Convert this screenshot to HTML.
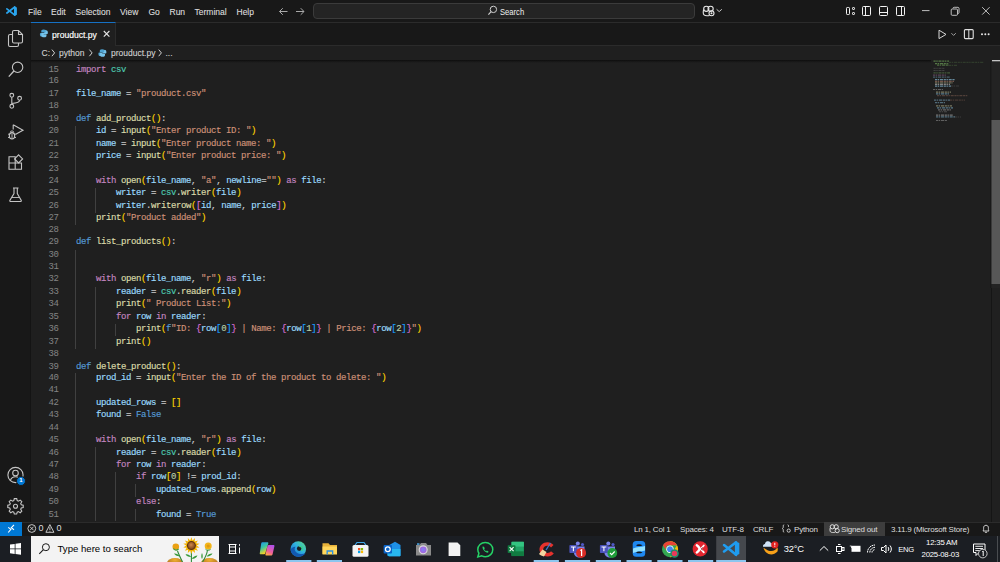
<!DOCTYPE html>
<html><head><meta charset="utf-8">
<style>
*{margin:0;padding:0;box-sizing:border-box}
html,body{width:1000px;height:562px;overflow:hidden;background:#1f1f1f;font-family:"Liberation Sans",sans-serif;color:#cccccc}
.a{position:absolute}
#title{left:0;top:0;width:1000px;height:23px;background:#181818;border-bottom:1px solid #2b2b2b}
.menu{top:5.5px;font-size:8.5px;color:#dedede;-webkit-text-stroke:0.1px currentColor;line-height:12px;white-space:pre}
#act{left:0;top:23px;width:31px;height:499px;background:#181818;border-right:1px solid #141414}
#tabs{left:31px;top:23px;width:969px;height:23px;background:#181818;border-bottom:1px solid #2b2b2b}
#tab{left:31px;top:22px;width:85px;height:24px;background:#1f1f1f;border-top:1.4px solid #1671c4;border-right:1px solid #2b2b2b}
#crumb{left:31px;top:46px;width:969px;height:14px;background:#1f1f1f}
#status{left:0;top:522px;width:1000px;height:14px;background:#181818;border-top:1px solid #2b2b2b}
#remote{left:0;top:522px;width:22px;height:14px;background:#0078d4}
#taskbar{left:0;top:536px;width:1000px;height:26px;background:#1b1e23}
#tsearch{left:31px;top:536px;width:188px;height:26px;background:#f3f3f3}
.tabt{font-size:8.6px;-webkit-text-stroke:0.15px currentColor;line-height:12px;white-space:pre}
.crumb{top:47px;font-size:8.5px;line-height:12px;color:#d2d2d2;-webkit-text-stroke:0.1px currentColor;white-space:pre}
.tb{color:#ffffff;line-height:12px;white-space:pre}
.sb{top:522.6px;font-size:8px;letter-spacing:-0.2px;line-height:13px;color:#dedede;white-space:pre}
#code{left:76px;top:63.6px;-webkit-text-stroke:0.15px currentColor;font-family:"Liberation Mono",monospace;font-size:9px;letter-spacing:-0.4px;line-height:11.435px;transform:scaleY(1.08);transform-origin:0 0;white-space:pre;color:#cccccc}
#ln{left:28.6px;top:63.6px;width:30px;font-family:"Liberation Mono",monospace;font-size:9px;letter-spacing:-0.4px;line-height:11.435px;transform:scaleY(1.08);transform-origin:0 0;white-space:pre;color:#858585;text-align:right}
.k{color:#c586c0}.d{color:#569cd6}.f{color:#dcdcaa}.v{color:#9cdcfe}.s{color:#ce9178}.m{color:#4ec9b0}.n{color:#b5cea8}
.guide{width:1px;background:#404040}
.b1{color:#ffd700}.b2{color:#da70d6}.b3{color:#179fff}
</style></head><body>
<div id="title" class="a"></div>
<div class="a menu" style="left:28px">File</div>
<div class="a menu" style="left:51px">Edit</div>
<div class="a menu" style="left:75.5px">Selection</div>
<div class="a menu" style="left:120px">View</div>
<div class="a menu" style="left:148.5px">Go</div>
<div class="a menu" style="left:169.5px">Run</div>
<div class="a menu" style="left:194.5px">Terminal</div>
<div class="a menu" style="left:236.5px">Help</div>
<div id="act" class="a"></div>
<svg class="a" style="left:0;top:0" width="1000" height="22" viewBox="0 0 1000 22" fill="none">
<!-- vscode logo -->
<path d="M14 6.3 L16.9 7.5 V14.7 L14 15.9 Z" fill="#2aa5ee"/>
<path d="M14.8 7 L6.9 13" stroke="#2aa5ee" stroke-width="1.7" stroke-linecap="round"/>
<path d="M6.9 8.8 L14.8 15.2" stroke="#2aa5ee" stroke-width="1.7" stroke-linecap="round"/>
<!-- arrows -->
<g stroke="#a8a8a8" stroke-width="1">
<path d="M279.5 11.5 H287.5 M282.8 8.2 L279.5 11.5 L282.8 14.8"/>
<path d="M296 11.5 H304 M300.7 8.2 L304 11.5 L300.7 14.8"/>
</g>
<!-- search box -->
<rect x="313.5" y="3.5" width="381" height="15" rx="3.5" fill="#242424" stroke="#3b3b3b"/>
<circle cx="493.4" cy="9.4" r="3.2" stroke="#d0d0d0" stroke-width="1"/>
<path d="M491.1 11.7 L488.4 14.6" stroke="#d0d0d0" stroke-width="1.1"/>
<!-- copilot -->
<g stroke="#e8e8e8" stroke-width="1.1">
<circle cx="706.3" cy="8.8" r="2.6"/>
<circle cx="710.6" cy="8.8" r="2.6"/>
<path d="M703.8 9.5 C703 11 703 14 704 14.8 C705 15.8 708 15.8 709.5 15.5"/>
<circle cx="711.5" cy="13.3" r="2.5"/>
</g>
<circle cx="711.5" cy="13.3" r="1" fill="#e8e8e8"/>
<path d="M716.6 9.3 L719.2 11.6 L721.8 9.3" stroke="#c8c8c8" stroke-width="1"/>
<!-- layout icons -->
<g stroke="#f2f2f2" stroke-width="1">
<rect x="846.5" y="7.5" width="3" height="7" rx="0.8"/>
<rect x="852.5" y="7.5" width="2" height="2" rx="0.6"/>
<rect x="852.5" y="12.5" width="2" height="2" rx="0.6"/>
<rect x="862.5" y="6.5" width="8" height="9" rx="1"/>
<path d="M865.5 6.5 V15.5"/>
<rect x="879.5" y="6.5" width="8" height="9" rx="1"/>
<path d="M879.5 12.5 H887.5"/>
<rect x="896.5" y="6.5" width="8" height="9" rx="1"/>
<path d="M901.5 6.5 V15.5"/>
</g>
<g stroke="#d0d0d0" stroke-width="0.9">
<path d="M922 10.6 H929.5"/>
<rect x="951.2" y="9" width="6.3" height="6.3" rx="1"/>
<path d="M953 8.5 V8.3 a1.2 1.2 0 0 1 1.2 -1 H958 a1.2 1.2 0 0 1 1 1 V12.5 a1.2 1.2 0 0 1 -1 1.1"/>
<path d="M982.2 7.2 L989.6 14.6 M989.6 7.2 L982.2 14.6"/>
</g>
</svg>
<div class="a" style="left:500px;top:6px;font-size:8.3px;line-height:12px;color:#f0f0f0;white-space:pre;transform:scaleX(0.92);transform-origin:0 0">Search</div>


<svg class="a" style="left:0;top:0" width="31" height="522" viewBox="0 0 31 522" fill="none" stroke="#c5c5c5" stroke-width="1.1">
<!-- explorer -->
<path d="M12.5 34.5 H10 a1.5 1.5 0 0 0 -1.5 1.5 V45 a1.5 1.5 0 0 0 1.5 1.5 H17 a1.5 1.5 0 0 0 1.5 -1.5 V43"/>
<path d="M12.5 32 a1.5 1.5 0 0 1 1.5 -1.5 H18.5 L22.5 34.5 V41.5 a1.5 1.5 0 0 1 -1.5 1.5 H14 a1.5 1.5 0 0 1 -1.5 -1.5 Z"/>
<path d="M18.5 30.8 V34.5 H22.3"/>
<!-- search -->
<circle cx="17.6" cy="67.3" r="5.2"/>
<path d="M13.9 71 L8.8 76.6" stroke-width="1.3"/>
<!-- source control -->
<circle cx="11.8" cy="95.3" r="1.9"/>
<circle cx="11.8" cy="106.3" r="1.9"/>
<circle cx="19.6" cy="98.3" r="1.9"/>
<path d="M11.8 97.2 V104.4 M19.6 100.2 C19.6 102.5 17 103 11.8 103.5"/>
<!-- run debug -->
<path d="M13.2 124.8 L23 130.2 L15.8 134.2 M13.2 124.8 V129.5"/>
<ellipse cx="12" cy="135.8" rx="2.7" ry="3.2"/>
<path d="M10.3 132.4 a1.7 1.5 0 0 1 3.4 0 M8 134.2 H9.3 M14.7 134.2 H16 M8 137.5 H9.3 M14.7 137.5 H16 M12 133.5 V138.8" stroke-width="0.9"/>
<!-- extensions -->
<path d="M9 156.8 H15.2 V163 H9 Z M9 163 H15.2 V169.2 H9 Z M15.2 163 H21.5 V169.2 H15.2 Z"/>
<path d="M18.6 154.9 L22.6 158.9 L18.6 162.9 L14.6 158.9 Z"/>
<!-- testing -->
<path d="M13 188 H18.5 M14 188 V193.5 L9.8 200.5 a0.8 0.8 0 0 0 0.7 1 H20.6 a0.8 0.8 0 0 0 0.7 -1 L17.3 193.5 V188"/>
<path d="M11.8 197.5 H19.4" stroke-width="0.9"/>
<!-- account -->
<circle cx="15.5" cy="475" r="7.6"/>
<circle cx="15.5" cy="473" r="2.8"/>
<path d="M10.3 480.6 C11.3 477.8 13 476.8 15.5 476.8 C18 476.8 19.7 477.8 20.7 480.6"/>
<!-- gear -->
<path d="M14.3 498.6 H16.7 L17.2 500.6 L18.4 501.2 L20.2 500.1 L21.8 501.7 L20.7 503.5 L21.3 504.8 L23.2 505.2 V507.5 L21.3 508 L20.7 509.3 L21.8 511.1 L20.2 512.7 L18.4 511.6 L17.2 512.2 L16.7 514 H14.3 L13.8 512.2 L12.6 511.6 L10.8 512.7 L9.2 511.1 L10.3 509.3 L9.7 508 L7.8 507.5 V505.2 L9.7 504.8 L10.3 503.5 L9.2 501.7 L10.8 500.1 L12.6 501.2 L13.8 500.6 Z"/>
<circle cx="15.5" cy="506.3" r="2"/>
</svg>
<div class="a" style="left:16px;top:475.5px;width:10px;height:10px;border-radius:50%;background:#0078d4;border:1px solid #181818"></div>
<div class="a" style="left:16px;top:476px;width:10px;height:10px;font-size:6px;line-height:9px;text-align:center;color:#fff;font-weight:bold">1</div>
<div id="tabs" class="a"></div>
<div id="tab" class="a"></div>
<div id="crumb" class="a"></div>
<div class="a guide" style="left:75.0px;top:126.25px;height:98.80px"></div>
<div class="a guide" style="left:75.0px;top:249.75px;height:98.80px"></div>
<div class="a guide" style="left:75.0px;top:373.25px;height:148.20px"></div>
<div class="a guide" style="left:95.0px;top:188.00px;height:24.70px"></div>
<div class="a guide" style="left:95.0px;top:286.80px;height:61.75px"></div>
<div class="a guide" style="left:95.0px;top:447.35px;height:74.10px"></div>
<div class="a guide" style="left:115.0px;top:323.85px;height:12.35px"></div>
<div class="a guide" style="left:115.0px;top:472.05px;height:49.40px"></div>
<div class="a guide" style="left:135.0px;top:484.40px;height:12.35px"></div>
<div class="a guide" style="left:135.0px;top:509.10px;height:12.35px"></div>
<div id="ln" class="a">15
16
17
18
19
20
21
22
23
24
25
26
27
28
29
30
31
32
33
34
35
36
37
38
39
40
41
42
43
44
45
46
47
48
49
50
51</div>
<div id="code" class="a"><span class="k">import</span> <span class="m">csv</span>

<span class="v">file_name</span> = <span class="s">"prouduct.csv"</span>

<span class="d">def</span> <span class="f">add_product</span><span class="b1">()</span>:
    <span class="v">id</span> = <span class="f">input</span><span class="b1">(</span><span class="s">"Enter product ID: "</span><span class="b1">)</span>
    <span class="v">name</span> = <span class="f">input</span><span class="b1">(</span><span class="s">"Enter product name: "</span><span class="b1">)</span>
    <span class="v">price</span> = <span class="f">input</span><span class="b1">(</span><span class="s">"Enter product price: "</span><span class="b1">)</span>

    <span class="k">with</span> <span class="f">open</span><span class="b1">(</span><span class="v">file_name</span>, <span class="s">"a"</span>, <span class="v">newline</span>=<span class="s">""</span><span class="b1">)</span> <span class="k">as</span> <span class="v">file</span>:
        <span class="v">writer</span> = <span class="m">csv</span>.<span class="f">writer</span><span class="b1">(</span><span class="v">file</span><span class="b1">)</span>
        <span class="v">writer</span>.<span class="f">writerow</span><span class="b1">(</span><span class="b2">[</span><span class="v">id</span>, <span class="v">name</span>, <span class="v">price</span><span class="b2">]</span><span class="b1">)</span>
    <span class="f">print</span><span class="b1">(</span><span class="s">"Product added"</span><span class="b1">)</span>

<span class="d">def</span> <span class="f">list_products</span><span class="b1">()</span>:


    <span class="k">with</span> <span class="f">open</span><span class="b1">(</span><span class="v">file_name</span>, <span class="s">"r"</span><span class="b1">)</span> <span class="k">as</span> <span class="v">file</span>:
        <span class="v">reader</span> = <span class="m">csv</span>.<span class="f">reader</span><span class="b1">(</span><span class="v">file</span><span class="b1">)</span>
        <span class="f">print</span><span class="b1">(</span><span class="s">" Product List:"</span><span class="b1">)</span>
        <span class="k">for</span> <span class="v">row</span> <span class="k">in</span> <span class="v">reader</span>:
            <span class="f">print</span><span class="b1">(</span><span class="d">f</span><span class="s">"ID: </span><span class="b2">{</span><span class="v">row</span><span class="b3">[</span><span class="n">0</span><span class="b3">]</span><span class="b2">}</span><span class="s"> | Name: </span><span class="b2">{</span><span class="v">row</span><span class="b3">[</span><span class="n">1</span><span class="b3">]</span><span class="b2">}</span><span class="s"> | Price: </span><span class="b2">{</span><span class="v">row</span><span class="b3">[</span><span class="n">2</span><span class="b3">]</span><span class="b2">}</span><span class="s">"</span><span class="b1">)</span>
        <span class="f">print</span><span class="b1">()</span>

<span class="d">def</span> <span class="f">delete_product</span><span class="b1">()</span>:
    <span class="v">prod_id</span> = <span class="f">input</span><span class="b1">(</span><span class="s">"Enter the ID of the product to delete: "</span><span class="b1">)</span>

    <span class="v">updated_rows</span> = <span class="b1">[]</span>
    <span class="v">found</span> = <span class="d">False</span>

    <span class="k">with</span> <span class="f">open</span><span class="b1">(</span><span class="v">file_name</span>, <span class="s">"r"</span><span class="b1">)</span> <span class="k">as</span> <span class="v">file</span>:
        <span class="v">reader</span> = <span class="m">csv</span>.<span class="f">reader</span><span class="b1">(</span><span class="v">file</span><span class="b1">)</span>
        <span class="k">for</span> <span class="v">row</span> <span class="k">in</span> <span class="v">reader</span>:
            <span class="k">if</span> <span class="v">row</span><span class="b1">[</span><span class="n">0</span><span class="b1">]</span> != <span class="v">prod_id</span>:
                <span class="v">updated_rows</span>.<span class="f">append</span><span class="b1">(</span><span class="v">row</span><span class="b1">)</span>
            <span class="k">else</span>:
                <span class="v">found</span> = <span class="d">True</span></div>
<div class="a" style="left:990.5px;top:60px;width:9.5px;height:462px;background:#202020;border-left:1px solid #151515"></div>
<svg class="a" style="left:928px;top:58px" width="72" height="230" viewBox="928 58 72 230">
<path d="M933.5 61.10 H949.0" stroke="#6a9955" stroke-width="1.2" stroke-dasharray="2.2 0.6 1.4 0.8 3 0.7" opacity="0.72"/>
<path d="M949.0 62.30 H984.0" stroke="#6a9955" stroke-width="1.0" stroke-dasharray="2.2 0.6 1.4 0.8 3 0.7" opacity="0.28"/>
<path d="M935.0 63.65 H949.0" stroke="#6a9955" stroke-width="1.3" stroke-dasharray="2.2 0.6 1.4 0.8 3 0.7" opacity="0.72"/>
<path d="M937.0 65.15 H949.0" stroke="#6a9955" stroke-width="1.3" stroke-dasharray="2.2 0.6 1.4 0.8 3 0.7" opacity="0.64"/>
<path d="M949.0 65.30 H957.0" stroke="#6a9955" stroke-width="1.0" stroke-dasharray="2.2 0.6 1.4 0.8 3 0.7" opacity="0.32"/>
<path d="M933.5 68.30 H945.0" stroke="#9a9a9a" stroke-width="1.0" stroke-dasharray="2.2 0.6 1.4 0.8 3 0.7" opacity="0.28"/>
<path d="M933.5 70.50 H945.0" stroke="#9a9a9a" stroke-width="1.0" stroke-dasharray="2.2 0.6 1.4 0.8 3 0.7" opacity="0.28"/>
<path d="M933.5 72.80 H950.0" stroke="#6a9955" stroke-width="1.2" stroke-dasharray="2.2 0.6 1.4 0.8 3 0.7" opacity="0.48"/>
<path d="M933.0 75.20 H946.0" stroke="#c586c0" stroke-width="1.2" stroke-dasharray="2.2 0.6 1.4 0.8 3 0.7" opacity="0.36"/>
<path d="M933.0 77.20 H950.0" stroke="#9cdcfe" stroke-width="1.2" stroke-dasharray="2.2 0.6 1.4 0.8 3 0.7" opacity="0.32"/>
<path d="M935.0 79.65 H955.0" stroke="#9cdcfe" stroke-width="1.3" stroke-dasharray="2.2 0.6 1.4 0.8 3 0.7" opacity="0.56"/>
<path d="M935.0 81.45 H954.0" stroke="#ce9178" stroke-width="1.3" stroke-dasharray="2.2 0.6 1.4 0.8 3 0.7" opacity="0.48"/>
<path d="M935.0 82.80 H953.0" stroke="#dcdcaa" stroke-width="1.2" stroke-dasharray="2.2 0.6 1.4 0.8 3 0.7" opacity="0.40"/>
<path d="M935.0 84.45 H950.0" stroke="#d4d4d4" stroke-width="1.3" stroke-dasharray="2.2 0.6 1.4 0.8 3 0.7" opacity="0.56"/>
<path d="M935.0 86.15 H951.0" stroke="#9cdcfe" stroke-width="1.3" stroke-dasharray="2.2 0.6 1.4 0.8 3 0.7" opacity="0.56"/>
<path d="M951.0 86.00 H959.0" stroke="#9a9a9a" stroke-width="1.0" stroke-dasharray="2.2 0.6 1.4 0.8 3 0.7" opacity="0.24"/>
<path d="M933.0 89.50 H943.0" stroke="#d4d4d4" stroke-width="1.0" stroke-dasharray="2.2 0.6 1.4 0.8 3 0.7" opacity="0.36"/>
<path d="M936.0 92.15 H951.0" stroke="#dcdcaa" stroke-width="1.3" stroke-dasharray="2.2 0.6 1.4 0.8 3 0.7" opacity="0.48"/>
<path d="M936.0 93.85 H949.0" stroke="#9cdcfe" stroke-width="1.3" stroke-dasharray="2.2 0.6 1.4 0.8 3 0.7" opacity="0.48"/>
<path d="M937.0 95.60 H968.0" stroke="#ce9178" stroke-width="1.2" stroke-dasharray="2.2 0.6 1.4 0.8 3 0.7" opacity="0.28"/>
<path d="M934.0 100.15 H950.0" stroke="#9cdcfe" stroke-width="1.3" stroke-dasharray="2.2 0.6 1.4 0.8 3 0.7" opacity="0.40"/>
<path d="M950.0 100.10 H965.0" stroke="#ce9178" stroke-width="1.0" stroke-dasharray="2.2 0.6 1.4 0.8 3 0.7" opacity="0.28"/>
<path d="M935.0 102.60 H945.0" stroke="#9cdcfe" stroke-width="1.2" stroke-dasharray="2.2 0.6 1.4 0.8 3 0.7" opacity="0.40"/>
<path d="M936.0 105.95 H952.0" stroke="#dcdcaa" stroke-width="1.3" stroke-dasharray="2.2 0.6 1.4 0.8 3 0.7" opacity="0.48"/>
<path d="M937.0 107.85 H953.0" stroke="#9cdcfe" stroke-width="1.3" stroke-dasharray="2.2 0.6 1.4 0.8 3 0.7" opacity="0.48"/>
<path d="M938.0 109.80 H951.0" stroke="#d4d4d4" stroke-width="1.2" stroke-dasharray="2.2 0.6 1.4 0.8 3 0.7" opacity="0.40"/>
<path d="M939.0 111.75 H947.0" stroke="#9a9a9a" stroke-width="1.1" stroke-dasharray="2.2 0.6 1.4 0.8 3 0.7" opacity="0.36"/>
<path d="M936.0 115.15 H953.0" stroke="#d4d4d4" stroke-width="1.3" stroke-dasharray="2.2 0.6 1.4 0.8 3 0.7" opacity="0.48"/>
<path d="M936.0 116.95 H955.0" stroke="#9cdcfe" stroke-width="1.3" stroke-dasharray="2.2 0.6 1.4 0.8 3 0.7" opacity="0.44"/>
<path d="M955.0 117.00 H961.0" stroke="#9a9a9a" stroke-width="1.0" stroke-dasharray="2.2 0.6 1.4 0.8 3 0.7" opacity="0.24"/>
<path d="M936.0 120.55 H947.0" stroke="#d4d4d4" stroke-width="1.1" stroke-dasharray="2.2 0.6 1.4 0.8 3 0.7" opacity="0.36"/>
<rect x="991" y="60" width="9" height="228" fill="#232323"/>
<rect x="990.5" y="60" width="0.8" height="228" fill="#141414"/>
<rect x="991.5" y="120" width="8.5" height="164" fill="#575757"/>
<rect x="992" y="60" width="8" height="1.3" fill="#c4c4c4"/>
</svg>
<div id="status" class="a"></div>
<div id="remote" class="a"></div>
<div id="taskbar" class="a"></div>
<div id="tsearch" class="a"></div>

<div class="a" style="left:31px;top:59.5px;width:900px;height:3px;background:linear-gradient(#0d0d0d,rgba(13,13,13,0.5) 40%,rgba(13,13,13,0))"></div>
<div class="a tabt" style="left:52px;top:28.8px;color:#ffffff">prouduct.py</div>
<div class="a crumb" style="left:41.5px">C:</div>
<div class="a crumb" style="left:59px">python</div>
<div class="a crumb" style="left:111px">prouduct.py</div>
<div class="a crumb" style="left:165.5px">...</div>

<svg class="a" style="left:0;top:22px" width="1000" height="40" viewBox="0 22 1000 40" fill="none">
<defs>
<g id="py">
<path d="M-0.3 -3.8 C-2.2 -3.8 -2.6 -3 -2.6 -2 V-0.9 H0.2 V-0.5 H-3.2 C-4.3 -0.5 -4 1 -3.8 2 C-3.6 2.8 -3.2 3 -2.6 3 H-1.8 V1.8 C-1.8 0.9 -1.1 0.3 -0.3 0.3 H1.7 C2.4 0.3 2.6 -0.2 2.6 -0.9 V-2 C2.6 -3 1.8 -3.8 -0.3 -3.8 Z" fill="#4fa3d1"/>
<path d="M0.3 3.8 C2.2 3.8 2.6 3 2.6 2 V0.9 H-0.2 V0.5 H3.2 C4.3 0.5 4 -1 3.8 -2 C3.6 -2.8 3.2 -3 2.6 -3 H1.8 V-1.8 C1.8 -0.9 1.1 -0.3 0.3 -0.3 H-1.7 C-2.4 -0.3 -2.6 0.2 -2.6 0.9 V2 C-2.6 3 -1.8 3.8 0.3 3.8 Z" fill="#76c3ea"/>
</g>
</defs>
<use href="#py" x="43.9" y="33.4"/>
<use href="#py" x="102.4" y="53"/>
<path d="M103.8 31 L109.4 36.6 M109.4 31 L103.8 36.6" stroke="#e6e6e6" stroke-width="1.1"/>
<g stroke="#d0d0d0" stroke-width="1">
<path d="M51.9 49.6 L54.6 52.9 L51.9 56.2"/>
<path d="M89.4 49.6 L92.1 52.9 L89.4 56.2"/>
<path d="M158.7 49.6 L161.4 52.9 L158.7 56.2"/>
</g>
<!-- tab bar right -->
<path d="M939 30.2 L946 34.4 L939 38.6 Z" stroke="#d6d6d6" stroke-width="1"/>
<path d="M951.4 33.2 L953.6 35.4 L955.8 33.2" stroke="#b0b0b0" stroke-width="0.9"/>
<rect x="964.4" y="29.6" width="8.8" height="9" rx="1" stroke="#e0e0e0" stroke-width="1.1"/>
<path d="M968.8 29.6 V38.6" stroke="#e0e0e0" stroke-width="1"/>
<g fill="#e8e8e8"><circle cx="982" cy="34.3" r="1"/><circle cx="985.3" cy="34.3" r="1"/><circle cx="988.6" cy="34.3" r="1"/></g>
</svg>

<div class="a" style="left:824px;top:522px;width:61px;height:13.5px;background:#3d3d3d"></div>
<svg class="a" style="left:0;top:518px" width="1000" height="18" viewBox="0 518 1000 18" fill="none">
<path d="M8.2 532.5 L10.9 529.4 L8.2 527.4 M14 525 L11.3 527.6 L14 529.7" stroke="#ffffff" stroke-width="1.1"/>
<circle cx="31.8" cy="528.5" r="3.9" stroke="#d8d8d8" stroke-width="0.9"/>
<path d="M30 526.7 L33.6 530.3 M33.6 526.7 L30 530.3" stroke="#d8d8d8" stroke-width="0.9"/>
<path d="M49.9 524.6 L53.9 532.3 H45.9 Z" stroke="#d8d8d8" stroke-width="0.9" stroke-linejoin="round"/>
<path d="M49.9 527.2 V530 M49.9 530.8 V531.6" stroke="#d8d8d8" stroke-width="0.9"/>
<path d="M784.2 524.8 C783 524.8 783.3 526 783.3 527 C783.3 528 782.5 528.5 782.3 528.5 C782.5 528.5 783.3 529 783.3 530 C783.3 531 783 532.2 784.2 532.2" stroke="#d8d8d8" stroke-width="0.9"/>
<path d="M787.6 524.8 C788.8 524.8 788.5 526 788.5 527" stroke="#d8d8d8" stroke-width="0.9"/>
<circle cx="788.7" cy="530.6" r="1.6" stroke="#d8d8d8" stroke-width="0.9"/>
<g stroke="#e0e0e0" stroke-width="1">
<circle cx="832.3" cy="526.8" r="2.1"/>
<circle cx="836.2" cy="526.8" r="2.1"/>
<path d="M830.3 527.6 C829.8 529 829.9 531.5 830.7 532 C831.5 532.6 833.5 532.6 834.8 532.4"/>
<circle cx="837.2" cy="530.6" r="2.1"/>
</g>
<path d="M983 531 C983.8 530 983.6 529 983.6 527.8 C983.6 526.2 984.6 525.3 986 525.3 C987.4 525.3 988.4 526.2 988.4 527.8 C988.4 529 988.2 530 989 531 Z M984.9 532.3 H987.1" stroke="#e0e0e0" stroke-width="0.9" stroke-linejoin="round"/>
</svg>
<div class="a sb" style="left:634px">Ln 1, Col 1</div>
<div class="a sb" style="left:680px">Spaces: 4</div>
<div class="a sb" style="left:722px">UTF-8</div>
<div class="a sb" style="left:753px">CRLF</div>
<div class="a sb" style="left:794px">Python</div>
<div class="a sb" style="left:841px">Signed out</div>
<div class="a sb" style="left:891px">3.11.9 (Microsoft Store)</div>
<div class="a sb" style="left:38.6px;top:522px;font-size:9px">0</div>
<div class="a sb" style="left:56.5px;top:522px;font-size:9px">0</div>
<div class="a" style="left:57.5px;top:542.2px;font-size:9.6px;line-height:14px;color:#000000;white-space:pre">Type here to search</div>

<svg class="a" style="left:0;top:536px" width="1000" height="26" viewBox="0 536 1000 26" fill="none">
<!-- windows logo -->
<path d="M10 544.6 L14.7 543.9 V548.5 H10 Z M15.5 543.8 L21 543 V548.5 H15.5 Z M10 549.3 H14.7 V554 L10 553.3 Z M15.5 549.3 H21 V554.8 L15.5 554.1 Z" fill="#ffffff"/>
<!-- search magnifier -->
<circle cx="45.9" cy="547.2" r="3.5" stroke="#1a1a1a" stroke-width="1"/>
<path d="M43.4 549.7 L39.3 553.8" stroke="#1a1a1a" stroke-width="1.1"/>
<!-- sunflower -->
<defs>
<radialGradient id="mnd" cx="0.5" cy="0.2" r="0.8"><stop offset="0" stop-color="#f0b030"/><stop offset="1" stop-color="#9a5a18"/></radialGradient>
<radialGradient id="ctr" cx="0.45" cy="0.4" r="0.6"><stop offset="0" stop-color="#d08848"/><stop offset="1" stop-color="#7a4418"/></radialGradient>
</defs>
<ellipse cx="175" cy="563" rx="8" ry="5" fill="url(#mnd)"/>
<ellipse cx="209.5" cy="563" rx="8.5" ry="5" fill="url(#mnd)"/>
<path d="M191.4 551 V562 M177.5 551 C179 555 180.5 558 182.5 562 M207.5 550 C207 554 205 558 202.5 562" stroke="#2f8a3a" stroke-width="1.1" fill="none"/>
<path d="M185.5 554.3 C187.5 553.8 190 555 191.2 557 C189 557.3 186.5 556.3 185.5 554.3 Z M197.5 555.5 C195.5 555.5 192.8 557 191.6 558.8 C193.8 559.2 196.5 557.8 197.5 555.5 Z M174 553.6 C176 553.2 178.5 554.4 179.6 556.2 C177.5 556.5 175 555.5 174 553.6 Z M212.5 553.6 C210.5 553.4 207.8 554.6 206.6 556.4 C208.8 556.8 211.5 555.6 212.5 553.6 Z M202 553 C203 555 203 557.5 202 559 C201 557.5 201 555 202 553 Z" fill="#3a9a3c"/>
<polygon points="191.40,537.30 192.56,540.53 195.00,538.12 194.64,541.53 197.89,540.43 196.09,543.34 199.49,543.75 196.60,545.60 199.49,547.45 196.09,547.86 197.89,550.77 194.64,549.67 195.00,553.08 192.56,550.67 191.40,553.90 190.24,550.67 187.80,553.08 188.16,549.67 184.91,550.77 186.71,547.86 183.31,547.45 186.20,545.60 183.31,543.75 186.71,543.34 184.91,540.43 188.16,541.53 187.80,538.12 190.24,540.53" fill="#f4b400"/>
<circle cx="191.4" cy="545.6" r="4.5" fill="#5a3010"/>
<circle cx="191.4" cy="545.6" r="3.5" fill="url(#ctr)"/>
<circle cx="175.8" cy="546.8" r="3.3" fill="#eaa012"/>
<path d="M173.5 548.5 C174.5 550.5 177 550.5 178.5 549" stroke="#3a9a3c" stroke-width="1.2" fill="none"/>
<circle cx="208.2" cy="546" r="3.5" fill="#f2b418"/>
<circle cx="208.2" cy="546" r="1.6" fill="#e09a10"/>
<path d="M205.5 549.2 C206.5 550.5 209 550.5 210.5 549.5" stroke="#3a9a3c" stroke-width="1" fill="none"/>
<!-- task view -->
<g stroke="#ffffff" stroke-width="1" fill="none">
<path d="M228.5 544.5 H236.5 M228.5 553.5 H236.5 M229.5 544.5 V553.5 M235.5 544.5 V553.5 M229.5 547 H235.5 M229.5 551 H235.5"/>
<path d="M239.5 547.5 V553.5"/>
</g>
<rect x="239" y="544.2" width="1" height="1.6" fill="#ffffff"/>
<!-- copilot -->
<defs>
<linearGradient id="cpl" x1="0" y1="0" x2="0.4" y2="1"><stop offset="0" stop-color="#1f8ff0"/><stop offset="0.5" stop-color="#3cc6a0"/><stop offset="1" stop-color="#ffd21f"/></linearGradient>
<linearGradient id="cpr" x1="0.6" y1="0" x2="0.2" y2="1"><stop offset="0" stop-color="#b050e8"/><stop offset="0.6" stop-color="#f0609a"/><stop offset="1" stop-color="#ffb040"/></linearGradient>
<linearGradient id="edg" x1="1" y1="0" x2="0" y2="1"><stop offset="0" stop-color="#5ee07a"/><stop offset="0.45" stop-color="#2fb0e0"/><stop offset="1" stop-color="#1464c8"/></linearGradient>
</defs>
<path d="M262.5 542.2 H267.5 C268.3 542.2 268.5 542.8 268.3 543.5 L265.3 553.2 C265 554 264.5 554.3 263.8 554.3 H260.7 C259.9 554.3 259.6 553.7 259.8 553 L261.2 543.5 C261.4 542.7 261.8 542.2 262.5 542.2 Z" fill="url(#cpl)"/>
<path d="M268.8 545 H273.5 C274.3 545 274.6 545.6 274.4 546.3 L272.6 554.3 C272.4 555.1 271.8 555.5 271 555.5 H266.4 C265.6 555.5 265.3 554.9 265.5 554.2 L267.5 546 C267.7 545.4 268.1 545 268.8 545 Z" fill="url(#cpr)"/>
<!-- edge -->
<circle cx="298.3" cy="549" r="7.8" fill="url(#edg)"/>
<path d="M290.6 550 C291.5 554.5 295 556.8 298.5 556.8 C301.5 556.8 304 555.5 305.5 553.3 C303 554.5 299 554.5 296.5 552.5 C294.5 551 294 548.5 295.5 546.8 C293 546.8 291 548.2 290.6 550 Z" fill="#1258b0"/>
<circle cx="299.2" cy="548.6" r="2.3" fill="#1b1e23"/>
<path d="M299.2 546.3 C301.5 546.3 302.6 547.5 302.6 549 C302.6 550 302 550.6 301.2 550.8" stroke="#3ad08a" stroke-width="1.4" fill="none"/>
<!-- explorer -->
<path d="M322.5 543.2 H328.5 L330 545 H337 V554 H322.5 Z" fill="#e8b23a"/>
<path d="M322.5 546.5 H337 V554.5 H322.5 Z" fill="#ffd65c"/>
<path d="M326.5 550.2 H333.3 V554.5 H332 V551.7 H327.8 V554.5 H326.5 Z" fill="#2a8ee0"/>
<!-- store -->
<path d="M354.5 546 L357 542.5 H364 L366.5 546" stroke="#40a8e8" stroke-width="1.2"/>
<rect x="352.5" y="545" width="16" height="11.8" rx="1.5" fill="#f4f4f4"/>
<rect x="358" y="548" width="2.3" height="2.3" fill="#f25022"/>
<rect x="360.8" y="548" width="2.3" height="2.3" fill="#7fba00"/>
<rect x="358" y="550.8" width="2.3" height="2.3" fill="#00a4ef"/>
<rect x="360.8" y="550.8" width="2.3" height="2.3" fill="#ffb900"/>
<!-- outlook -->
<path d="M387.5 546 L395 541.8 L400.5 545 V555.5 C400.5 556 400 556.2 399.5 556.2 H389 C388 556.2 387.5 555.5 387.5 555 Z" fill="#1e90e6"/>
<path d="M387.5 549 L400.5 549 V555.5 C400.5 556 400 556.2 399.5 556.2 H389 C388 556.2 387.5 555.5 387.5 555 Z" fill="#28b8f0"/>
<rect x="383.6" y="545" width="8.4" height="8.4" rx="1" fill="#0a64c8"/>
<circle cx="387.8" cy="549.2" r="2.4" stroke="#ffffff" stroke-width="1.2"/>
<!-- camera -->
<path d="M416 545 H419.5 L421 543 H426 L427.5 545 H431 V555.5 H416 Z" fill="#8a8a8a"/>
<rect x="417" y="543.3" width="2.5" height="1.5" fill="#4aa8e8"/>
<circle cx="423.2" cy="549.8" r="4.5" fill="#dcdcdc"/>
<circle cx="423.2" cy="549.8" r="3.4" fill="#a06ae0"/>
<circle cx="423.2" cy="549.8" r="2" fill="#8a7cf0"/>
<!-- notepad doc -->
<path d="M448.6 542.5 H457.5 L460.3 545.3 V556 H448.6 Z" fill="#f2f2f2"/>
<!-- whatsapp -->
<path d="M485.3 542.5 C489.5 542.5 492.8 545.6 492.8 549.6 C492.8 553.6 489.5 556.7 485.3 556.7 C484 556.7 482.8 556.4 481.8 555.9 L477.8 557 L478.9 553.2 C478.2 552.1 477.8 550.9 477.8 549.6 C477.8 545.6 481.1 542.5 485.3 542.5 Z" stroke="#25d366" stroke-width="1.5"/>
<path d="M482.6 546.5 C482.3 547.5 482.7 549 484 550.6 C485.4 552.2 487 553 488.2 552.6 L488.5 551.4 L486.9 550.6 L486.2 551.3 C485.3 550.9 484.5 550 484.1 549.1 L484.8 548.4 L484 546.8 Z" fill="#25d366"/>
<!-- excel -->
<rect x="511.5" y="541.8" width="12.4" height="14.3" rx="1" fill="#21a366"/>
<rect x="511.5" y="541.8" width="12.4" height="4.8" fill="#33c481"/>
<rect x="511.5" y="551.3" width="12.4" height="4.8" fill="#107c41"/>
<rect x="507.7" y="545.3" width="7.8" height="7.8" rx="0.8" fill="#107c41"/>
<path d="M509.6 547.2 L513.6 551.2 M513.6 547.2 L509.6 551.2" stroke="#ffffff" stroke-width="1.1"/>
<!-- ccleaner -->
<path d="M553.5 545 C552 543.3 550 542.2 547.5 542.2 C543 542.2 539.5 545.5 539.5 549.5 C539.5 553.5 543 556.5 547.5 556.5 C550 556.5 552.3 555.4 553.8 553.6 L551 551.3 C550.2 552.3 549 553 547.5 553 C545 553 543.2 551.4 543.2 549.5 C543.2 547.4 545 545.8 547.5 545.8 C549 545.8 550.2 546.4 551 547.4 Z" fill="#e5322d"/>
<path d="M550.5 543 L546 550" stroke="#3a7bd5" stroke-width="1.3"/>
<path d="M542.5 549.5 L546.5 552 L544 556.5 C542 556 540 555 539 554 Z" fill="#f3d6a0"/>
<!-- teams 1 -->
<circle cx="577.8" cy="543.6" r="2" fill="#7b83eb"/>
<circle cx="582.5" cy="544.5" r="1.6" fill="#5059c9"/>
<path d="M574 546.5 H584.5 V553 C584.5 556 582 557.5 579.5 557.5 C576.5 557.5 574 555.5 574 553 Z" fill="#7b83eb"/>
<rect x="569.4" y="545" width="8" height="8" rx="0.8" fill="#4b53bc"/>
<path d="M571 547 H575.8 M573.4 547 V551.3" stroke="#ffffff" stroke-width="1.1"/>
<circle cx="581.1" cy="552.9" r="5" fill="#d92c26"/>
<path d="M580.3 550.5 L581.6 549.8 V556" stroke="#ffffff" stroke-width="1.2"/>
<!-- teams 2 -->
<circle cx="608.3" cy="543.6" r="2" fill="#7b83eb"/>
<circle cx="613" cy="544.5" r="1.6" fill="#5059c9"/>
<path d="M604.5 546.5 H615 V553 C615 556 612.5 557.5 610 557.5 C607 557.5 604.5 555.5 604.5 553 Z" fill="#7b83eb"/>
<rect x="599.9" y="545" width="8" height="8" rx="0.8" fill="#4b53bc"/>
<path d="M601.5 547 H606.3 M603.9 547 V551.3" stroke="#ffffff" stroke-width="1.1"/>
<circle cx="612.3" cy="553" r="4.9" fill="#1f9d3a"/>
<path d="M610 553 L611.7 554.7 L614.7 551.5" stroke="#ffffff" stroke-width="1.1"/>
<!-- zigzag app -->
<rect x="632.7" y="541" width="12.5" height="15.8" rx="3.5" fill="#1e88f0"/>
<path d="M633 548.5 C637 546.5 641 547.5 645 546 V550.5 C641 552 637 551 633 553 Z" fill="#8fe0ff"/>
<path d="M636 545.2 C637.5 544 640.5 544 642.5 545.2 C640.5 546.4 637.5 546.4 636 545.2 Z" fill="#10141a"/>
<path d="M636 552.4 C637.5 551.2 640.5 551.2 642.5 552.4 C640.5 553.6 637.5 553.6 636 552.4 Z" fill="#10141a"/>
<!-- chrome -->
<circle cx="670" cy="549.2" r="8" fill="#34a853"/>
<path d="M670 541.2 A8 8 0 0 1 677 545.2 H670 Z" fill="#fbbc04"/>
<path d="M670 541.2 A8 8 0 0 0 663 545.2 L666.5 551 A3.6 3.6 0 0 1 670 545.2 H677 A8 8 0 0 0 670 541.2 Z" fill="#ea4335"/>
<path d="M677 545.2 A8 8 0 0 1 670 557.2 L673.4 551 Z" fill="#fbbc04"/>
<circle cx="670" cy="549.2" r="3.7" fill="#ffffff"/>
<circle cx="670" cy="549.2" r="2.9" fill="#4285f4"/>
<circle cx="674.5" cy="553.5" r="4.3" fill="#1e8e6a"/>
<circle cx="674.5" cy="553.5" r="2.7" fill="#e83a5a"/>
<!-- xmind red -->
<circle cx="700.2" cy="548.9" r="7.6" fill="#e3262f"/>
<path d="M696.8 545.3 C698 546 699 547.3 699.8 548.9 C699 550.5 698 551.8 696.8 552.5" stroke="#ffffff" stroke-width="2.4" fill="none" stroke-linecap="round"/>
<path d="M703.8 545.5 L700.8 548.9 L703.8 552.3" stroke="#ffffff" stroke-width="1.8" fill="none" stroke-linecap="round"/>
<path d="M702.5 547.5 L701.5 548.9 L702.5 550.3" stroke="#7a1018" stroke-width="1" fill="none"/>
<!-- vscode active bg -->
<rect x="716.2" y="536" width="29.8" height="26" fill="#45484d"/>
<g transform="translate(722.8 540.6) scale(1.53) translate(-6.1 -5.9)">
<path d="M14 6.3 L16.9 7.5 V14.7 L14 15.9 Z" fill="#1f9cf0"/>
<path d="M14.8 7 L6.9 13" stroke="#1f9cf0" stroke-width="1.7" stroke-linecap="round"/>
<path d="M6.9 8.8 L14.8 15.2" stroke="#1f9cf0" stroke-width="1.7" stroke-linecap="round"/>
</g>
<!-- underlines -->
<g fill="#8cc6ef">
<rect x="286.2" y="560" width="25.2" height="2"/>
<rect x="316.8" y="560" width="25.2" height="2"/>
<rect x="533.7" y="560" width="25.2" height="2"/>
<rect x="564.9" y="560" width="25.2" height="2"/>
<rect x="595.8" y="560" width="25.2" height="2"/>
<rect x="626.5" y="560" width="25.2" height="2"/>
<rect x="657.3" y="560" width="25.2" height="2"/>
<rect x="688" y="560" width="25.2" height="2"/>
<rect x="716.2" y="560" width="29.8" height="2"/>
</g>
<!-- weather -->
<path d="M763.5 547.8 C764.5 553.5 772 557.5 777.5 551.5 C778 549.5 778 548 777 547.5 C776 550.5 772 552 768 550.5 Z" fill="#f7a11a"/>
<path d="M763 546.7 H771.5 C772.5 546.7 773 546 773 545 C773 543.8 772 543 771 543.2 C770.5 541.8 769 541 767.5 541.3 C766 541.5 765 542.6 765 544 C763.8 544 762.8 545 763 546.7 Z" fill="#cfe3f8"/>
<circle cx="774.8" cy="544.8" r="3.6" fill="#e0201f"/>
<path d="M774.8 542.8 V545.4 M774.8 546.3 V547" stroke="#ffffff" stroke-width="1"/>
<!-- tray -->
<g stroke="#ffffff" stroke-width="1">
<path d="M819.8 550.6 L824 546.5 L828.2 550.6"/>
<rect x="836.5" y="546.5" width="5" height="5"/>
<path d="M838 544.5 H840.5 M838 553.5 H840.5"/>
<rect x="842" y="547.5" width="2" height="3"/>
<path d="M867.5 552.5 C867.5 548.5 870.5 545.2 875 545 M869.8 552.5 C869.8 550 871.8 547.5 875 547.3 M872 552.5 C872 551 873.2 549.7 875 549.6" stroke-dasharray="1.6 0.5"/>
<path d="M881.5 547.5 H883.5 L886 545 V553 L883.5 550.5 H881.5 Z M888 547 C889 548 889 550 888 551 M890 545.5 C891.8 547.5 891.8 550.5 890 552.5"/>
</g>
<path d="M851.5 545.8 H860.5 V551.8 H851.5 Z" fill="#ffffff"/>
<path d="M849.8 546 H851.5 V548" stroke="#ffffff" stroke-width="0.8"/>
<!-- notification -->
<path d="M973.5 544 H985 V552.5 H979 L976 555.5 V552.5 H973.5 Z" stroke="#ffffff" stroke-width="1" fill="#1b1e23"/>
<path d="M975.3 546.3 H983 M975.3 548.5 H983 M975.3 550.6 H981" stroke="#ffffff" stroke-width="0.9"/>
<circle cx="982.8" cy="553.6" r="4.3" fill="#1b1e23" stroke="#d8d8d8" stroke-width="0.9"/>
<path d="M982.3 551.6 L983.2 551 V556" stroke="#ffffff" stroke-width="1"/>
<path d="M997.5 536 V562" stroke="#55585c" stroke-width="0.8"/>
</svg>
<div class="a tb" style="left:783.8px;top:542.8px;font-size:9.4px;letter-spacing:-0.25px">32°C</div>
<div class="a tb" style="left:898.3px;top:543.5px;font-size:7.6px;letter-spacing:-0.3px">ENG</div>
<div class="a tb" style="left:926px;top:537.2px;font-size:7.8px;letter-spacing:-0.2px">12:35 AM</div>
<div class="a tb" style="left:921.6px;top:548.7px;font-size:7.8px;letter-spacing:-0.25px">2025-08-03</div>
</body></html>
